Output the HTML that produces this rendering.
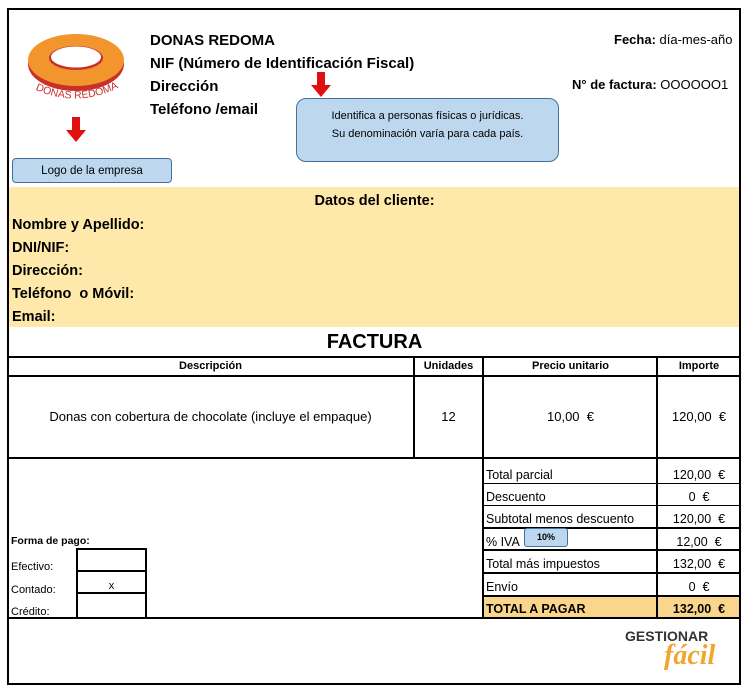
<!DOCTYPE html>
<html><head><meta charset="utf-8"><style>
body{margin:0;width:749px;height:693px;background:#fff;position:relative;font-family:"Liberation Sans",sans-serif;color:#000;overflow:hidden}
div{position:absolute;box-sizing:border-box}
.t{white-space:nowrap}
.h{background:#000}
.b{font-weight:bold}
.l{left:486px;font-size:12.5px}
.r{left:658px;width:82px;text-align:center;font-size:12.5px}
</style></head><body>
<div style="left:7px;top:8px;width:734px;height:677px;border:2px solid #000"></div>
<svg style="position:absolute;left:26px;top:28px" width="104" height="80">
<ellipse cx="50" cy="36" rx="48" ry="27" fill="#c9302c"/>
<ellipse cx="50" cy="32" rx="48" ry="26" fill="#f2952d"/>
<ellipse cx="50" cy="30" rx="27" ry="12" fill="#c9302c"/>
<ellipse cx="50" cy="29" rx="25" ry="10.5" fill="#fff"/>
<path id="arc" d="M6,60 Q50,82 96,58" fill="none"/>
<text font-size="10.5" fill="#c9302c" font-family="Liberation Sans"><textPath href="#arc" startOffset="50%" text-anchor="middle">DONAS REDOMA</textPath></text>
</svg>
<svg style="position:absolute;left:66px;top:117px" width="20" height="26"><rect x="6" y="0" width="8" height="14" fill="#e01010"/><polygon points="0,13 20,13 10,25" fill="#e01010"/></svg>
<svg style="position:absolute;left:311px;top:72px" width="20" height="26"><rect x="6" y="0" width="8" height="14" fill="#e01010"/><polygon points="0,13 20,13 10,25" fill="#e01010"/></svg>
<div style="left:12px;top:158px;width:160px;height:25px;background:#bdd7ee;border:1px solid #41719c;border-radius:4px;font-size:11.5px;text-align:center;line-height:24px">Logo de la empresa</div>
<div style="left:296px;top:98px;width:263px;height:64px;background:#bdd7ee;border:1px solid #41719c;border-radius:10px;font-size:11px;text-align:center;line-height:18px;padding-top:8px">Identifica a personas físicas o jurídicas.<br>Su denominación varía para cada país.</div>
<div class="t b" style="left:150px;top:29px;font-size:15px;line-height:23px">DONAS REDOMA<br>NIF (Número de Identificación Fiscal)<br>Dirección<br>Teléfono /email</div>
<div class="t" style="left:614px;top:32px;font-size:13px"><b>Fecha:</b> día-mes-año</div>
<div class="t" style="left:572px;top:77px;font-size:13px"><b>N° de factura:</b> OOOOOO1</div>
<div style="left:9px;top:187px;width:730px;height:140px;background:#fee8aa"></div>
<div style="left:484px;top:596px;width:255px;height:21px;background:#fad58c"></div>
<div class="t b" style="left:0;width:749px;text-align:center;top:193px;font-size:14.5px">Datos del cliente:</div>
<div class="t b" style="left:12px;top:214px;font-size:14.5px;line-height:23px">Nombre y Apellido:<br>DNI/NIF:<br>Dirección:<br>Teléfono &nbsp;o Móvil:<br>Email:</div>
<div class="t b" style="left:0;width:749px;text-align:center;top:331px;font-size:20px">FACTURA</div>
<div class="h" style="left:8px;top:356px;width:732px;height:2px"></div>
<div class="h" style="left:8px;top:375px;width:732px;height:2px"></div>
<div class="h" style="left:8px;top:457px;width:732px;height:2px"></div>
<div class="h" style="left:413px;top:357px;width:2px;height:101px"></div>
<div class="h" style="left:482px;top:357px;width:2px;height:261px"></div>
<div class="h" style="left:656px;top:357px;width:2px;height:261px"></div>
<div class="h" style="left:8px;top:617px;width:732px;height:2px"></div>
<div class="t b" style="left:8px;width:405px;text-align:center;top:360px;font-size:11px">Descripción</div>
<div class="t b" style="left:414px;width:69px;text-align:center;top:360px;font-size:11px">Unidades</div>
<div class="t b" style="left:484px;width:173px;text-align:center;top:360px;font-size:11px">Precio unitario</div>
<div class="t b" style="left:658px;width:82px;text-align:center;top:360px;font-size:11px">Importe</div>
<div class="t" style="left:8px;width:405px;text-align:center;top:409px;font-size:13px">Donas con cobertura de chocolate (incluye el empaque)</div>
<div class="t" style="left:414px;width:69px;text-align:center;top:409px;font-size:13px">12</div>
<div class="t" style="left:484px;width:173px;text-align:center;top:409px;font-size:13px">10,00 &nbsp;€</div>
<div class="t" style="left:658px;width:82px;text-align:center;top:409px;font-size:13px">120,00 &nbsp;€</div>
<div class="h" style="left:483px;top:483px;width:257px;height:1px"></div>
<div class="h" style="left:483px;top:505px;width:257px;height:1px"></div>
<div class="h" style="left:483px;top:527px;width:257px;height:2px"></div>
<div class="h" style="left:483px;top:549px;width:257px;height:2px"></div>
<div class="h" style="left:483px;top:572px;width:257px;height:2px"></div>
<div class="h" style="left:483px;top:595px;width:257px;height:2px"></div>
<div class="t l" style="top:468px">Total parcial</div><div class="t r" style="top:468px">120,00 &nbsp;€</div>
<div class="t l" style="top:490px">Descuento</div><div class="t r" style="top:490px">0 &nbsp;€</div>
<div class="t l" style="top:512px">Subtotal menos descuento</div><div class="t r" style="top:512px">120,00 &nbsp;€</div>
<div class="t l" style="top:535px">% IVA</div><div class="t r" style="top:535px">12,00 &nbsp;€</div>
<div class="t l" style="top:557px">Total más impuestos</div><div class="t r" style="top:557px">132,00 &nbsp;€</div>
<div class="t l" style="top:580px">Envío</div><div class="t r" style="top:580px">0 &nbsp;€</div>
<div class="t l b" style="top:602px">TOTAL A PAGAR</div><div class="t r b" style="top:602px">132,00 &nbsp;€</div>
<div style="left:524px;top:528px;width:44px;height:19px;background:#bdd7ee;border:1px solid #41719c;border-radius:3px;font-size:9px;font-weight:bold;text-align:center;line-height:17px">10%</div>
<div class="t b" style="left:11px;top:535px;font-size:10.5px">Forma de pago:</div>
<div class="t" style="left:11px;top:556px;font-size:11px;line-height:22.5px">Efectivo:<br>Contado:<br>Crédito:</div>
<div style="left:76px;top:548px;width:71px;height:70px;border:2px solid #000;border-bottom:none"></div>
<div class="h" style="left:76px;top:570px;width:71px;height:2px"></div>
<div class="h" style="left:76px;top:592px;width:71px;height:2px"></div>
<div class="t" style="left:76px;width:71px;text-align:center;top:580px;font-size:11px">x</div>
<div class="t b" style="left:625px;top:628px;font-size:14px;color:#333">GESTIONAR</div>
<div class="t" style="left:664px;top:640px;font-size:28px;color:#f0a531;font-style:italic;font-weight:bold;font-family:'Liberation Serif',serif">fácil</div>
</body></html>
